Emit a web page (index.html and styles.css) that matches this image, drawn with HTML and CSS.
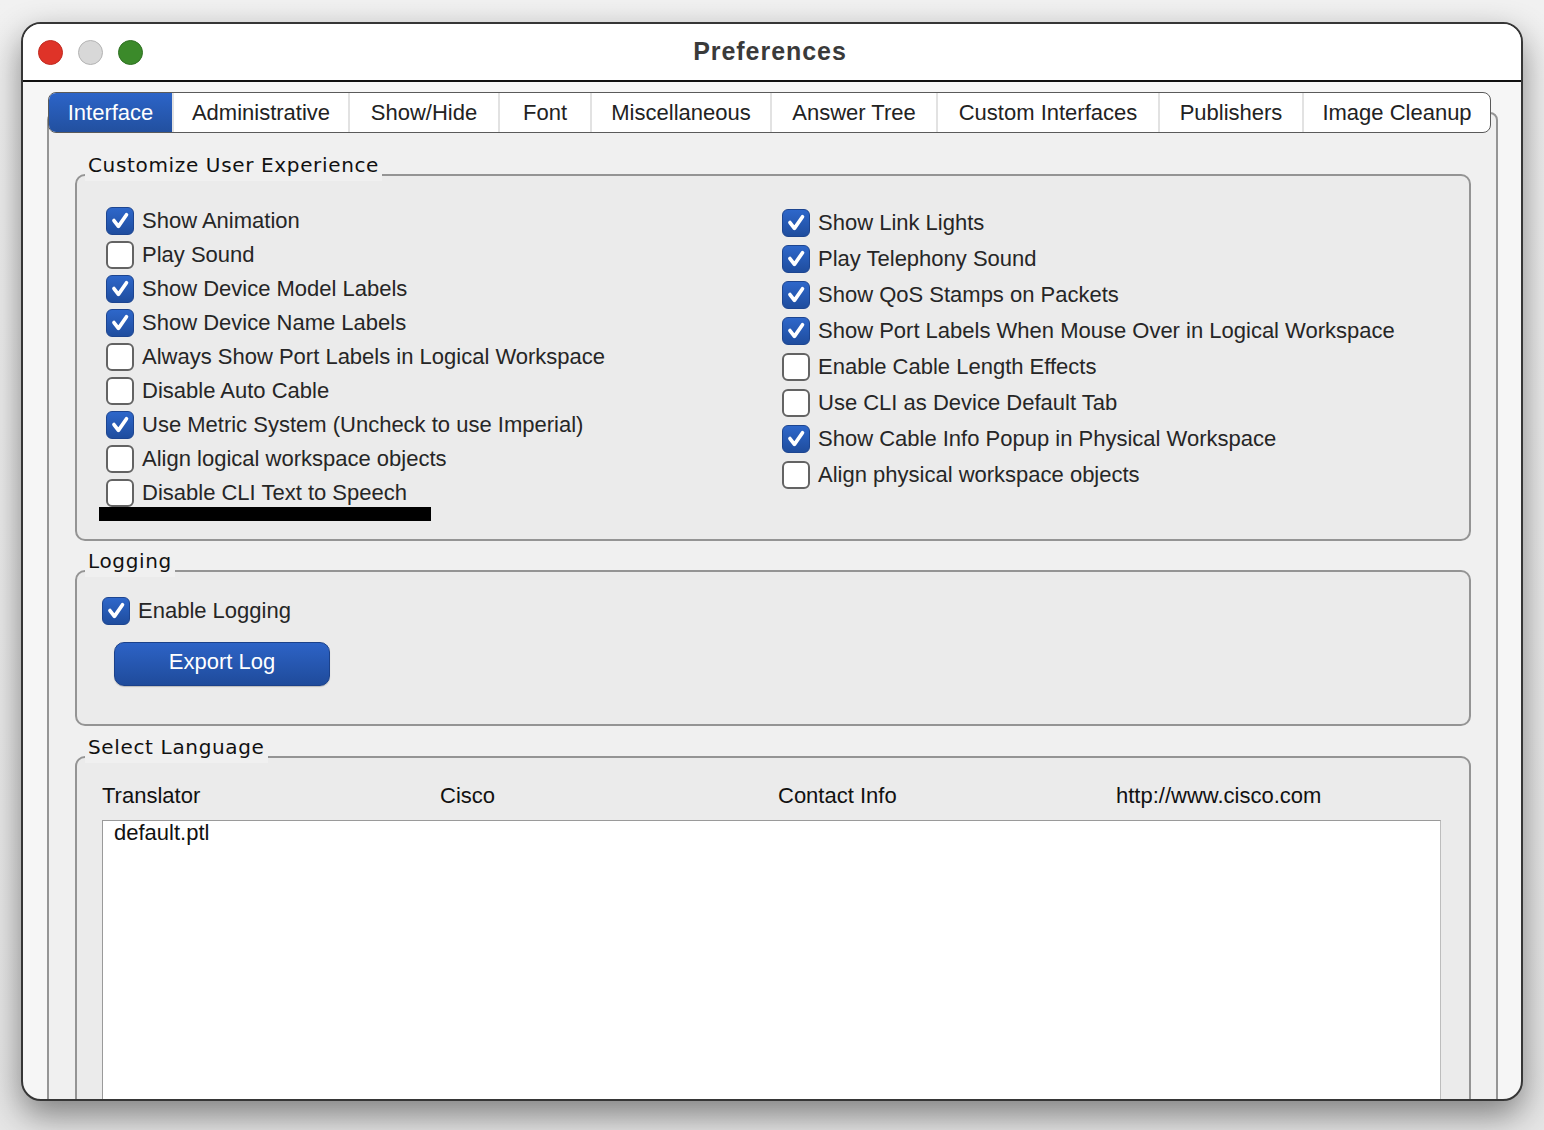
FILE: index.html
```html
<!DOCTYPE html>
<html>
<head>
<meta charset="utf-8">
<title>Preferences</title>
<link rel="stylesheet" href="styles.css">
</head>
<body>
<div class="window">
  <div class="titlebar">
    <div class="lights">
      <span class="light red"></span>
      <span class="light gray"></span>
      <span class="light green"></span>
    </div>
    <div class="title">Preferences</div>
    <div></div>
  </div>
  <div class="content">
    <div class="tabs">
      <div class="tab active">Interface</div>
      <div class="tab">Administrative</div>
      <div class="tab">Show/Hide</div>
      <div class="tab">Font</div>
      <div class="tab">Miscellaneous</div>
      <div class="tab">Answer Tree</div>
      <div class="tab">Custom Interfaces</div>
      <div class="tab">Publishers</div>
      <div class="tab">Image Cleanup</div>
    </div>
    <div class="panel">
      <div class="group group-ux">
        <div class="group-title">Customize User Experience</div>
        <div class="ux-grid">
          <div class="col col-left">
            <div class="row"><span class="cb on"><svg viewBox="0 0 28 28"><path d="M7.5 13.5 L12.3 19.8 L21 7.2"/></svg></span><span class="lbl">Show Animation</span></div>
            <div class="row"><span class="cb"></span><span class="lbl">Play Sound</span></div>
            <div class="row"><span class="cb on"><svg viewBox="0 0 28 28"><path d="M7.5 13.5 L12.3 19.8 L21 7.2"/></svg></span><span class="lbl">Show Device Model Labels</span></div>
            <div class="row"><span class="cb on"><svg viewBox="0 0 28 28"><path d="M7.5 13.5 L12.3 19.8 L21 7.2"/></svg></span><span class="lbl">Show Device Name Labels</span></div>
            <div class="row"><span class="cb"></span><span class="lbl">Always Show Port Labels in Logical Workspace</span></div>
            <div class="row"><span class="cb"></span><span class="lbl">Disable Auto Cable</span></div>
            <div class="row"><span class="cb on"><svg viewBox="0 0 28 28"><path d="M7.5 13.5 L12.3 19.8 L21 7.2"/></svg></span><span class="lbl">Use Metric System (Uncheck to use Imperial)</span></div>
            <div class="row"><span class="cb"></span><span class="lbl">Align logical workspace objects</span></div>
            <div class="row"><span class="cb"></span><span class="lbl">Disable CLI Text to Speech</span></div>
            <div class="blackbar"></div>
          </div>
          <div class="col col-right">
            <div class="row"><span class="cb on"><svg viewBox="0 0 28 28"><path d="M7.5 13.5 L12.3 19.8 L21 7.2"/></svg></span><span class="lbl">Show Link Lights</span></div>
            <div class="row"><span class="cb on"><svg viewBox="0 0 28 28"><path d="M7.5 13.5 L12.3 19.8 L21 7.2"/></svg></span><span class="lbl">Play Telephony Sound</span></div>
            <div class="row"><span class="cb on"><svg viewBox="0 0 28 28"><path d="M7.5 13.5 L12.3 19.8 L21 7.2"/></svg></span><span class="lbl">Show QoS Stamps on Packets</span></div>
            <div class="row"><span class="cb on"><svg viewBox="0 0 28 28"><path d="M7.5 13.5 L12.3 19.8 L21 7.2"/></svg></span><span class="lbl">Show Port Labels When Mouse Over in Logical Workspace</span></div>
            <div class="row"><span class="cb"></span><span class="lbl">Enable Cable Length Effects</span></div>
            <div class="row"><span class="cb"></span><span class="lbl">Use CLI as Device Default Tab</span></div>
            <div class="row"><span class="cb on"><svg viewBox="0 0 28 28"><path d="M7.5 13.5 L12.3 19.8 L21 7.2"/></svg></span><span class="lbl">Show Cable Info Popup in Physical Workspace</span></div>
            <div class="row"><span class="cb"></span><span class="lbl">Align physical workspace objects</span></div>
          </div>
        </div>
      </div>

      <div class="group group-log">
        <div class="group-title">Logging</div>
        <div class="row"><span class="cb on"><svg viewBox="0 0 28 28"><path d="M7.5 13.5 L12.3 19.8 L21 7.2"/></svg></span><span class="lbl">Enable Logging</span></div>
        <button class="btn">Export Log</button>
      </div>

      <div class="group group-lang">
        <div class="group-title">Select Language</div>
        <div class="lang-head">
          <span>Translator</span>
          <span>Cisco</span>
          <span>Contact Info</span>
          <span>http://www.cisco.com</span>
        </div>
        <div class="lang-list">
          <div class="lang-item">default.ptl</div>
        </div>
      </div>
    </div>
  </div>
</div>
</body>
</html>
```

FILE: styles.css
```css
* { box-sizing: border-box; }

html, body {
  margin: 0;
  padding: 0;
}

body {
  width: 1544px;
  height: 1130px;
  overflow: hidden;
  background: linear-gradient(#f1f1f1, #e6e6e6);
  font-family: "Liberation Sans", Arial, sans-serif;
  padding: 22px 0 0 21px;
}

.window {
  width: 1502px;
  height: 1079px;
  border: 2px solid #363636;
  border-radius: 20px;
  overflow: hidden;
  background: #f6f6f6;
  box-shadow: 0 14px 34px rgba(0, 0, 0, 0.45);
}

.titlebar {
  height: 58px;
  background: #ffffff;
  border-bottom: 2px solid #111;
  display: grid;
  grid-template-columns: 1fr auto 1fr;
  align-items: center;
}

.lights {
  display: flex;
  gap: 15px;
  padding-left: 15px;
  align-items: center;
}

.light {
  width: 25px;
  height: 25px;
  border-radius: 50%;
  display: block;
}
.light.red { background: #df3328; border: 1px solid #c02a20; }
.light.gray { background: #d8d8d8; border: 1px solid #b3b3b3; }
.light.green { background: #3b8a2a; border: 1px solid #2f7022; }

.title {
  font-weight: bold;
  font-size: 25px;
  letter-spacing: 0.95px;
  color: #3a3a3a;
  margin-left: -4px;
  margin-top: -2px;
}

.content {
  padding: 10px 23px 0 24px;
}

.tabs {
  position: relative;
  z-index: 1;
  display: flex;
  height: 41px;
  width: 1443px;
  margin-left: 1px;
  border: 1px solid #5a5a5a;
  border-radius: 8px;
  background: #ffffff;
  overflow: hidden;
}

.tab {
  display: flex;
  align-items: center;
  justify-content: center;
  font-size: 22px;
  color: #222;
  border-left: 2px solid #e2e2e2;
  white-space: nowrap;
}
.tab:nth-child(1) { width: 123px; border-left: none; }
.tab:nth-child(2) { width: 176px; }
.tab:nth-child(3) { width: 150px; }
.tab:nth-child(4) { width: 92px; }
.tab:nth-child(5) { width: 180px; }
.tab:nth-child(6) { width: 166px; }
.tab:nth-child(7) { width: 222px; }
.tab:nth-child(8) { width: 144px; }
.tab:nth-child(9) { width: 188px; }

.tab.active {
  background: linear-gradient(#2c64c8, #22509f);
  color: #ffffff;
}

.panel {
  margin-top: -21px;
  height: 1100px;
  border: 2px solid #959595;
  border-radius: 8px;
  background: #f0f0f0;
  padding: 60px 25px 0 26px;
}

.group {
  position: relative;
  border: 2px solid #949494;
  border-radius: 10px;
  background: #ebebeb;
}

.group-title {
  position: absolute;
  left: 8px;
  top: -23px;
  padding: 0 3px 4px 3px;
  background: #f0f0f0;
  font-family: "DejaVu Sans", "Liberation Sans", sans-serif;
  font-size: 20px;
  letter-spacing: 0.65px;
  line-height: 24px;
  color: #111;
}

.group-ux {
  padding: 28px 0 18px 29px;
}

.ux-grid {
  display: grid;
  grid-template-columns: 676px 1fr;
}

.col-left .row { height: 34px; }
.col-right { margin-top: 1px; }
.col-right .row { height: 36px; }

.row {
  display: flex;
  align-items: center;
  gap: 8px;
  height: 34px;
}

.lbl {
  font-size: 22px;
  color: #262626;
  white-space: nowrap;
}

.cb {
  width: 28px;
  height: 28px;
  border-radius: 6px;
  background: #ffffff;
  border: 2px solid #636363;
  flex: none;
  display: block;
}

.cb.on {
  border: 1px solid #1d4590;
  background: linear-gradient(#2e67ca, #1f4d9e);
}

.cb svg {
  display: block;
  width: 26px;
  height: 26px;
}

.cb svg path {
  fill: none;
  stroke: #ffffff;
  stroke-width: 3.9;
  stroke-linecap: round;
  stroke-linejoin: round;
}

.blackbar {
  width: 332px;
  height: 14px;
  background: #000;
  margin-top: -3px;
  margin-left: -7px;
}

.group-log {
  margin-top: 29px;
  padding: 22px 0 38px 25px;
}

.btn {
  display: block;
  margin: 14px 0 0 12px;
  width: 216px;
  height: 44px;
  border: 1px solid #1b418a;
  border-radius: 10px;
  background: linear-gradient(#2d63c6, #1f4b9b);
  color: #ffffff;
  font-family: "Liberation Sans", Arial, sans-serif;
  font-size: 22px;
  padding: 0 0 5px 0;
  box-shadow: 0 1px 1px rgba(0, 0, 0, 0.2);
}

.group-lang {
  margin-top: 30px;
  padding: 26px 28px 0 25px;
}

.lang-head {
  display: grid;
  grid-template-columns: 338px 338px 338px 1fr;
  height: 24px;
  line-height: 24px;
  font-size: 22px;
  color: #111;
}

.lang-list {
  margin-top: 12px;
  height: 400px;
  background: #ffffff;
  border: 1px solid #9a9a9a;
  border-right-color: #bdbdbd;
}

.lang-item {
  padding: 0 11px;
  line-height: 24px;
  font-size: 22px;
  color: #111;
}
```
